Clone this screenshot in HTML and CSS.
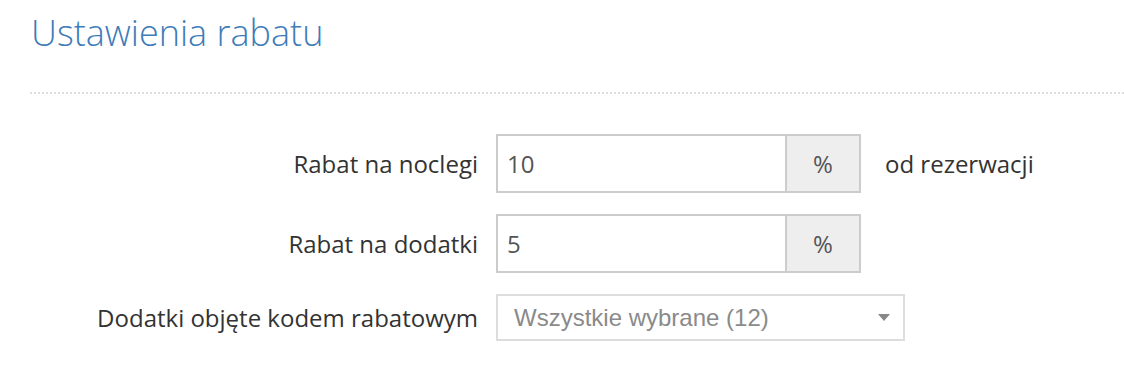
FILE: index.html
```html
<!DOCTYPE html>
<html lang="pl">
<head>
    <title>Ustawienia rabatu</title>
    <meta charset="UTF-8">
    <meta name="viewport" content="width=device-width, initial-scale=1.0">
    <link rel="stylesheet" href="styles.css">
</head>
<body>
    <div class="panel">
        <h1 class="panel-title">Ustawienia rabatu</h1>
        <div class="divider"></div>
        <div class="form-grid">
            <label class="form-label" for="rabat-noclegi">Rabat na noclegi</label>
            <div class="form-control-row">
                <div class="input-group">
                    <input class="input-field" id="rabat-noclegi" type="text" value="10">
                    <span class="input-addon">%</span>
                </div>
                <span class="input-hint">od rezerwacji</span>
            </div>

            <label class="form-label" for="rabat-dodatki">Rabat na dodatki</label>
            <div class="form-control-row">
                <div class="input-group">
                    <input class="input-field" id="rabat-dodatki" type="text" value="5">
                    <span class="input-addon">%</span>
                </div>
            </div>

            <label class="form-label">Dodatki objęte kodem rabatowym</label>
            <div class="form-control-row">
                <div class="select-box">
                    <span class="select-text">Wszystkie wybrane (12)</span>
                    <span class="select-caret"></span>
                </div>
            </div>
        </div>
    </div>
</body>
</html>
```

FILE: styles.css
```css
:root {
  --title: #3d7cb9;
  --text: #333333;
  --field-border: #cccccc;
}

body{
    margin: 0;
    padding: 0;
    background-color: #ffffff;
    font-family: "Open Sans", "Noto Sans", sans-serif;
    color: var(--text);
}
.panel{
    padding-left: 30px;
}
.panel-title{
    margin: 0;
    padding-top: 9px;
    font-size: 36px;
    font-weight: 300;
    line-height: 48px;
    color: var(--title);
    padding-left: 1px;
}
.divider{
    margin-top: 35px;
    border-top: 2px dotted #dddddd;
}
.form-grid{
    display: grid;
    grid-template-columns: 448px auto;
    column-gap: 18px;
    row-gap: 21px;
    align-items: center;
    margin-top: 40px;
}
.form-label{
    text-align: right;
    font-size: 24px;
    color: var(--text);
}
.form-control-row{
    display: flex;
    align-items: center;
}
.input-group{
    display: flex;
    height: 59px;
    width: 365px;
    box-sizing: border-box;
    border: 2px solid var(--field-border);
}
.input-field{
    flex: 1;
    min-width: 0;
    border: 0;
    outline: none;
    padding: 0 0 0 9px;
    font-family: "Open Sans", sans-serif;
    font-size: 24px;
    color: #555555;
    background: transparent;
}
.input-addon{
    width: 72px;
    border-left: 2px solid var(--field-border);
    background-color: #eeeeee;
    display: flex;
    align-items: center;
    justify-content: center;
    font-size: 24px;
    color: #555555;
}
.input-hint{
    margin-left: 24px;
    font-size: 24px;
}
.select-box{
    width: 409px;
    height: 47px;
    box-sizing: border-box;
    border: 2px solid #dddddd;
    display: flex;
    align-items: center;
    justify-content: space-between;
    padding: 0 13px 0 16px;
}
.select-text{
    font-family: "Liberation Sans", Arial, sans-serif;
    font-size: 24px;
    color: #8a8a8a;
}
.select-caret{
    width: 0;
    height: 0;
    border-left: 6px solid transparent;
    border-right: 6px solid transparent;
    border-top: 7px solid #888888;
}
```
